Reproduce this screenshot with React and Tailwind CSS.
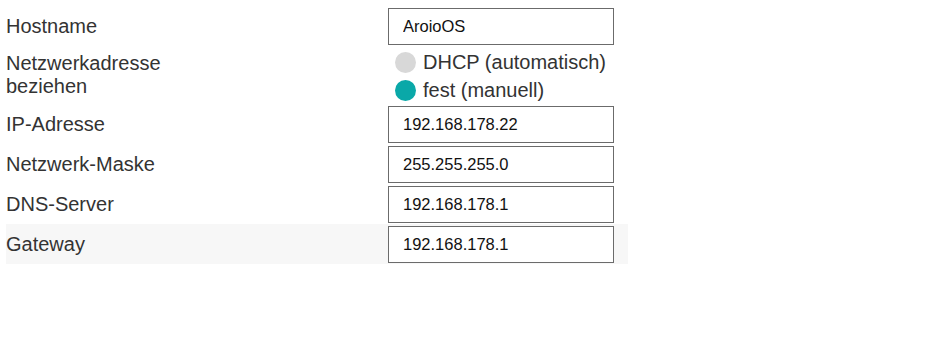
import React, { useState } from 'react';

const fields = [
    { label: 'IP-Adresse', value: '192.168.178.22' },
    { label: 'Netzwerk-Maske', value: '255.255.255.0' },
    { label: 'DNS-Server', value: '192.168.178.1' },
    { label: 'Gateway', value: '192.168.178.1', shaded: true },
];

const Row = ({ label, children, className = '' }) => (
    <div className={`flex items-center ${className}`}>
        <div className="w-[382px] shrink-0 text-[20px] leading-[23px] text-[#333]">{label}</div>
        <div className="flex-1">{children}</div>
    </div>
);

const TextInput = ({ value }) => (
    <input
        type="text"
        defaultValue={value}
        className="w-[226px] h-[37px] border border-[#6b6b6b] bg-white pl-[14px] text-[16.5px] text-[#111] outline-none"
    />
);

const Radio = ({ checked, label, onClick }) => (
    <div className="flex items-center h-[28px] cursor-pointer" onClick={onClick}>
        <span className={`ml-[7px] w-[21px] h-[21px] rounded-full ${checked ? 'bg-[#0aa8a8]' : 'bg-[#d8d8d8]'}`} />
        <span className="ml-[7px] text-[20px] leading-[23px] text-[#333]">{label}</span>
    </div>
);

const App = () => {
    const [mode, setMode] = useState('fest');

    return (
        <div className="w-[946px] h-[338px] bg-white pt-[6px] pl-[6px]" style={{ fontFamily: '"Liberation Sans", Arial, sans-serif' }}>
            <div className="w-[622px]">
                <Row label="Hostname" className="h-[40px]">
                    <TextInput value="AroioOS" />
                </Row>
                <Row label={<span>Netzwerkadresse<br />beziehen</span>} className="h-[58px]">
                    <div className="flex flex-col pt-[2px]">
                        <Radio checked={mode === 'dhcp'} label="DHCP (automatisch)" onClick={() => setMode('dhcp')} />
                        <Radio checked={mode === 'fest'} label="fest (manuell)" onClick={() => setMode('fest')} />
                    </div>
                </Row>
                {fields.map(f => (
                    <Row key={f.label} label={f.label} className={`h-[40px] ${f.shaded ? 'bg-[#f7f7f7]' : ''}`}>
                        <TextInput value={f.value} />
                    </Row>
                ))}
            </div>
        </div>
    );
};

export default App;
